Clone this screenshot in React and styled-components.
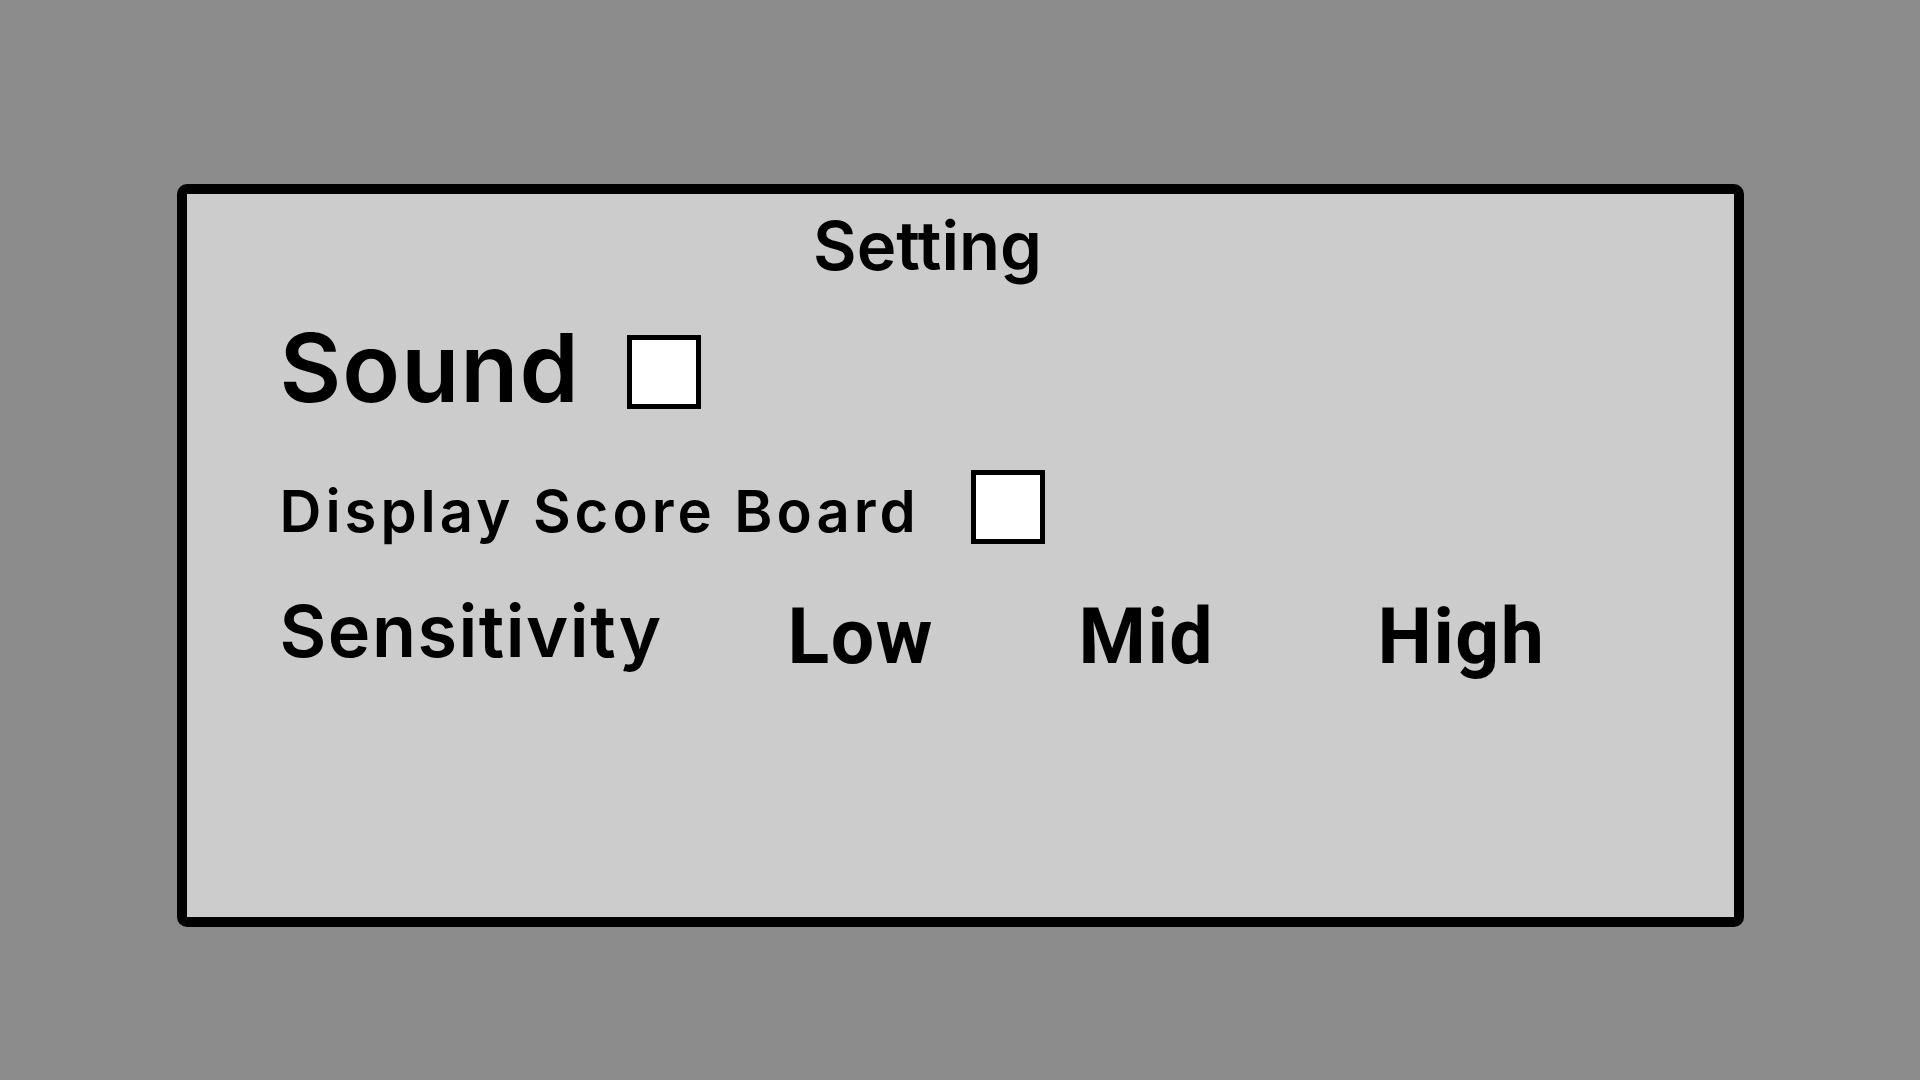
import styled, { createGlobalStyle } from 'styled-components'

const GlobalStyle = createGlobalStyle`
  body {
    margin: 0;
    background: #8c8c8c;
    font-family: "Inter", "Noto Sans CJK KR", sans-serif;
  }
`

const Page = styled.div`
  min-height: 100vh;
  padding-top: 184px;
  box-sizing: border-box;
`

const Panel = styled.div`
  width: 1567px;
  height: 743px;
  margin: 0 auto;
  box-sizing: border-box;
  border: 10px solid #000;
  border-radius: 10px;
  background: #cccccc;
  padding: 18px 0 0 93px;
  color: #000;
`

const Title = styled.h1`
  margin: 0;
  padding-right: 158px;
  text-align: center;
  font-size: 67px;
  font-weight: 600;
  line-height: 67px;
`

const Row = styled.div`
  display: flex;
  align-items: ${p => p.$align || 'center'};
  gap: ${p => p.$gap || 0}px;
  margin-top: ${p => p.$top || 0}px;
`

const Label = styled.span`
  font-size: ${p => p.$size}px;
  line-height: ${p => p.$size}px;
  letter-spacing: ${p => p.$spacing || 0}px;
  margin-top: ${p => p.$shift || 0}px;
  font-weight: 600;
`

const Check = styled.input.attrs({ type: 'checkbox' })`
  appearance: none;
  margin: ${p => p.$shift || 0}px 0 0;
  width: 74px;
  height: 74px;
  box-sizing: border-box;
  border: 5px solid #000;
  background: #fff;
`

const Options = styled.div`
  display: grid;
  grid-template-columns: 291px 299px auto;
  margin: 4px 0 0 125px;
`

const Option = styled.span`
  font-family: "Roboto", sans-serif;
  font-size: 77px;
  line-height: 77px;
  letter-spacing: 1.5px;
  font-weight: 700;
`

export default function App() {
  return (
    <Page>
      <GlobalStyle />
      <Panel>
        <Title>Setting</Title>
        <Row $top={41} $gap={47}>
          <Label $size={95} $spacing={1}>Sound</Label>
          <Check $shift={9} />
        </Row>
        <Row $top={55} $gap={51}>
          <Label $size={58} $spacing={4} $shift={8}>Display Score Board</Label>
          <Check />
        </Row>
        <Row $top={51} $align="flex-start">
          <Label $size={72} $spacing={1.5}>Sensitivity</Label>
          <Options>
            <Option>Low</Option>
            <Option>Mid</Option>
            <Option>High</Option>
          </Options>
        </Row>
      </Panel>
    </Page>
  )
}
